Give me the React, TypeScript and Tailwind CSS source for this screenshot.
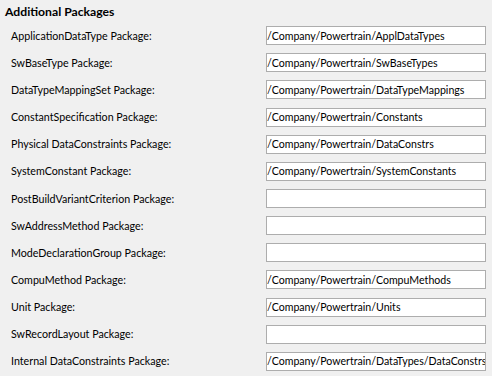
const ROWS: { label: string; value: string }[] = [
  { label: 'ApplicationDataType Package:', value: '/Company/Powertrain/ApplDataTypes' },
  { label: 'SwBaseType Package:', value: '/Company/Powertrain/SwBaseTypes' },
  { label: 'DataTypeMappingSet Package:', value: '/Company/Powertrain/DataTypeMappings' },
  { label: 'ConstantSpecification Package:', value: '/Company/Powertrain/Constants' },
  { label: 'Physical DataConstraints Package:', value: '/Company/Powertrain/DataConstrs' },
  { label: 'SystemConstant Package:', value: '/Company/Powertrain/SystemConstants' },
  { label: 'PostBuildVariantCriterion Package:', value: '' },
  { label: 'SwAddressMethod Package:', value: '' },
  { label: 'ModeDeclarationGroup Package:', value: '' },
  { label: 'CompuMethod Package:', value: '/Company/Powertrain/CompuMethods' },
  { label: 'Unit Package:', value: '/Company/Powertrain/Units' },
  { label: 'SwRecordLayout Package:', value: '' },
  { label: 'Internal DataConstraints Package:', value: '/Company/Powertrain/DataTypes/DataConstrs' },
];

export default function App() {
  return (
    <div
      className="w-[492px] h-[376px] overflow-hidden bg-[#f0f0f0] text-black text-[10.7px]"
      style={{ fontFamily: 'Lato, "Liberation Sans", sans-serif' }}
    >
      <div className="h-[22px] pl-[5px] pt-[4px] text-[12.2px] font-bold leading-[16px]">
        Additional Packages
      </div>
      {ROWS.map((r) => (
        <div key={r.label} className="flex h-[27.17px] items-center">
          <div className="w-[266px] pl-[11px] leading-[16px]">{r.label}</div>
          <input
            readOnly
            value={r.value}
            className="h-[19px] w-[220px] border border-[#adadad] bg-white px-0 text-[10.6px] leading-[16px] text-black outline-none"
            style={{ fontFamily: 'inherit' }}
          />
        </div>
      ))}
    </div>
  );
}
